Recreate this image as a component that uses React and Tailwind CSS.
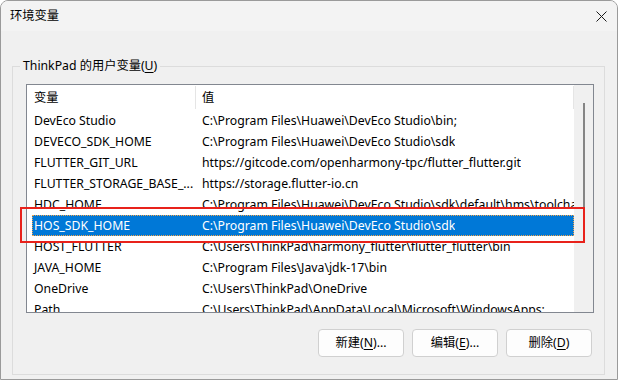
import React from "react";

const rows = [
  ["DevEco Studio", "C:\\Program Files\\Huawei\\DevEco Studio\\bin;"],
  ["DEVECO_SDK_HOME", "C:\\Program Files\\Huawei\\DevEco Studio\\sdk"],
  ["FLUTTER_GIT_URL", "https://gitcode.com/openharmony-tpc/flutter_flutter.git"],
  ["FLUTTER_STORAGE_BASE_...", "https://storage.flutter-io.cn"],
  ["HDC_HOME", "C:\\Program Files\\Huawei\\DevEco Studio\\sdk\\default\\hms\\toolchains"],
  ["HOS_SDK_HOME", "C:\\Program Files\\Huawei\\DevEco Studio\\sdk"],
  ["HOST_FLUTTER", "C:\\Users\\ThinkPad\\harmony_flutter\\flutter_flutter\\bin"],
  ["JAVA_HOME", "C:\\Program Files\\Java\\jdk-17\\bin"],
  ["OneDrive", "C:\\Users\\ThinkPad\\OneDrive"],
  ["Path", "C:\\Users\\ThinkPad\\AppData\\Local\\Microsoft\\WindowsApps;"],
];

const SELECTED = 5;

const Btn = ({ label, hot, rest }) => (
  <button className="w-[86px] h-[28px] rounded-[4px] border border-[#d0d0d0] bg-[#fdfdfd] text-[12.25px] leading-[16px] text-black flex items-center justify-center">
    {label}(<span className="underline underline-offset-2">{hot}</span>){rest}
  </button>
);

export default function App() {
  return (
    <div
      className="relative w-[618px] h-[380px] bg-[#f0f0f0] border border-[#9a9a9a] rounded-t-[8px] overflow-hidden flex flex-col text-black text-[12.25px] leading-[16px]"
      style={{ fontFamily: '"Noto Sans", "Noto Sans CJK SC", sans-serif' }}
    >
      {/* Title bar */}
      <div className="h-[30px] bg-[#f3f3f3] flex items-center justify-between pl-[9px] pr-[9px] shrink-0">
        <span>环境变量</span>
        <svg width="11" height="11" viewBox="0 0 11 11" className="mr-[1px]">
          <path d="M0.5 0.5 L10.5 10.5 M10.5 0.5 L0.5 10.5" stroke="#1a1a1a" strokeWidth="1" />
        </svg>
      </div>

      {/* Body */}
      <div className="flex-1 pt-[35px] pl-[11px]">
        <div className="relative w-[593px] h-[309px] border border-[#dcdcdc] pt-[17px] pl-[13px] pr-[11px] flex flex-col">
          <span className="absolute -top-[9px] left-[7px] bg-[#f0f0f0] px-[3px]">
            ThinkPad 的用户变量(<span className="underline underline-offset-2">U</span>)
          </span>

          {/* List view */}
          <div className="w-[568px] h-[229px] border border-[#828790] bg-white flex">
            <div className="flex-1 flex flex-col overflow-hidden">
              <div className="h-[25px] flex shrink-0">
                <div className="w-[169px] flex items-center pl-[7px] border-r border-[#e5e5e5] my-[1px]">
                  变量
                </div>
                <div className="flex-1 flex items-center pl-[6px] border-r border-[#e5e5e5] my-[1px]">值</div>
              </div>
              <div className="flex flex-col overflow-hidden">
                {rows.map(([name, value], i) => (
                  <div
                    key={name}
                    className={
                      i === SELECTED
                        ? "ml-[5px] h-[21px] shrink-0 flex items-center bg-[#0078d7] text-white outline outline-1 outline-dotted outline-[#f5a54a] -outline-offset-1"
                        : "ml-[5px] h-[21px] shrink-0 flex items-center"
                    }
                  >
                    <div className="w-[164px] pl-[2px] py-[2px] whitespace-nowrap overflow-hidden shrink-0">{name}</div>
                    <div className="pl-[6px] py-[2px] whitespace-nowrap overflow-hidden">{value}</div>
                  </div>
                ))}
              </div>
            </div>
            {/* Scrollbar */}
            <div className="w-[19px] bg-[#f0f0f0] flex justify-center pt-[18px] shrink-0">
              <div className="w-[2px] h-[132px] bg-[#858585]" />
            </div>
          </div>

          {/* Buttons */}
          <div className="flex justify-end gap-[8px] mt-[16px] pr-[1px]">
            <Btn label="新建" hot="N" rest="..." />
            <Btn label="编辑" hot="E" rest="..." />
            <Btn label="删除" hot="D" rest="" />
          </div>
        </div>
      </div>

      {/* Annotation highlight */}
      <div className="absolute left-[19px] top-[206px] w-[565px] h-[36px] border-2 border-[#e8221b] pointer-events-none" />
    </div>
  );
}
